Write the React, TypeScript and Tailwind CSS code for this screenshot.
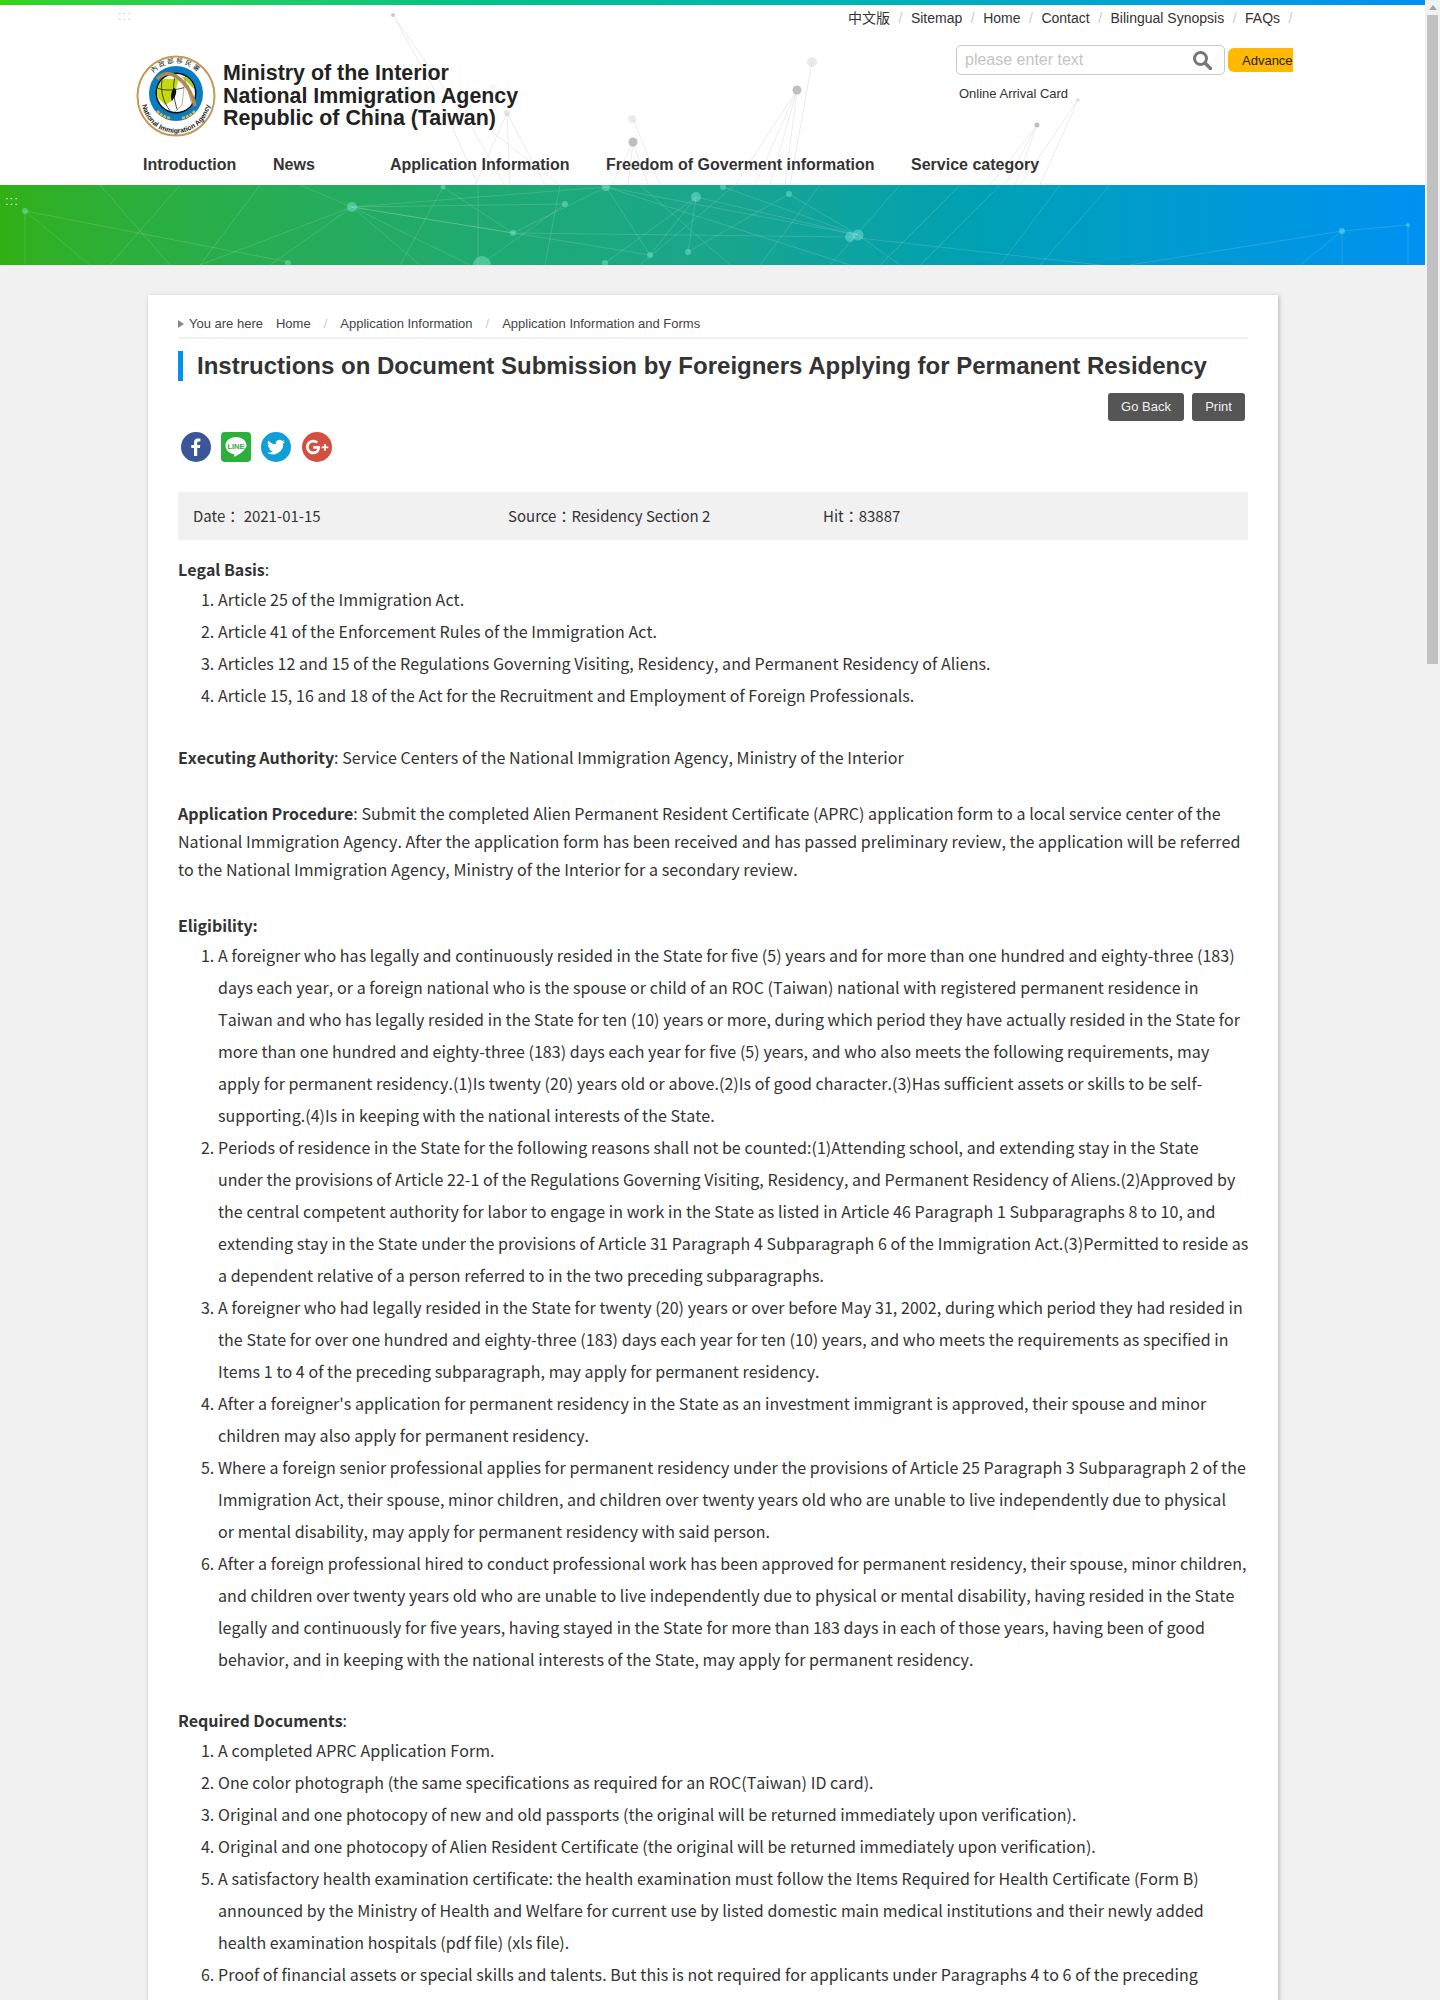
const sans = "font-['Liberation_Sans',Arial,sans-serif]";

const topLinks = ['中文版', 'Sitemap', 'Home', 'Contact', 'Bilingual Synopsis', 'FAQs'];

const navItems = [
  { label: 'Introduction', width: 'w-[130px]' },
  { label: 'News', width: 'w-[117px]' },
  { label: 'Application Information', width: 'w-[216px]' },
  { label: 'Freedom of Goverment information', width: 'w-[305px]' },
  { label: 'Service category', width: 'w-[140px]' },
];

const legalBasis = [
  'Article 25 of the Immigration Act.',
  'Article 41 of the Enforcement Rules of the Immigration Act.',
  'Articles 12 and 15 of the Regulations Governing Visiting, Residency, and Permanent Residency of Aliens.',
  'Article 15, 16 and 18 of the Act for the Recruitment and Employment of Foreign Professionals.',
];

const eligibility = [
  'A foreigner who has legally and continuously resided in the State for five (5) years and for more than one hundred and eighty-three (183) days each year, or a foreign national who is the spouse or child of an ROC (Taiwan) national with registered permanent residence in Taiwan and who has legally resided in the State for ten (10) years or more, during which period they have actually resided in the State for more than one hundred and eighty-three (183) days each year for five (5) years, and who also meets the following requirements, may\napply for permanent residency.(1)Is twenty (20) years old or above.(2)Is of good character.(3)Has sufficient assets or skills to be self-supporting.(4)Is in keeping with the national interests of the State.',
  'Periods of residence in the State for the following reasons shall not be counted:(1)Attending school, and extending stay in the State\nunder the provisions of Article 22-1 of the Regulations Governing Visiting, Residency, and Permanent Residency of Aliens.(2)Approved by the central competent authority for labor to engage in work in the State as listed in Article 46 Paragraph 1 Subparagraphs 8 to 10, and extending stay in the State under the provisions of Article 31 Paragraph 4 Subparagraph 6 of the Immigration Act.(3)Permitted to reside as a dependent relative of a person referred to in the two preceding subparagraphs.',
  'A foreigner who had legally resided in the State for twenty (20) years or over before May 31, 2002, during which period they had resided in the State for over one hundred and eighty-three (183) days each year for ten (10) years, and who meets the requirements as specified in Items 1 to 4 of the preceding subparagraph, may apply for permanent residency.',
  "After a foreigner's application for permanent residency in the State as an investment immigrant is approved, their spouse and minor children may also apply for permanent residency.",
  'Where a foreign senior professional applies for permanent residency under the provisions of Article 25 Paragraph 3 Subparagraph 2 of the Immigration Act, their spouse, minor children, and children over twenty years old who are unable to live independently due to physical\nor mental disability, may apply for permanent residency with said person.',
  'After a foreign professional hired to conduct professional work has been approved for permanent residency, their spouse, minor children, and children over twenty years old who are unable to live independently due to physical or mental disability, having resided in the State legally and continuously for five years, having stayed in the State for more than 183 days in each of those years, having been of good behavior, and in keeping with the national interests of the State, may apply for permanent residency.',
];

const documents = [
  'A completed APRC Application Form.',
  'One color photograph (the same specifications as required for an ROC(Taiwan) ID card).',
  'Original and one photocopy of new and old passports (the original will be returned immediately upon verification).',
  'Original and one photocopy of Alien Resident Certificate (the original will be returned immediately upon verification).',
  'A satisfactory health examination certificate: the health examination must follow the Items Required for Health Certificate (Form B) announced by the Ministry of Health and Welfare for current use by listed domestic main medical institutions and their newly added health examination hospitals (pdf file) (xls file).',
  'Proof of financial assets or special skills and talents. But this is not required for applicants under Paragraphs 4 to 6 of the preceding',
];

function Emblem() {
  return (
    <svg viewBox="0 0 80 82" className="w-[80px] h-[82px] shrink-0">
      <defs>
        <path id="ringBottom" d="M5.500 44 A34.500 34 0 0 0 74.500 44" fill="none" />
        <path id="ringTop" d="M10 38 A30 30 0 0 1 70 38" fill="none" />
        <clipPath id="globeClip">
          <circle cx="40" cy="38" r="19" />
        </clipPath>
      </defs>
      <ellipse cx="40" cy="41" rx="38.500" ry="39.500" fill="#fff" stroke="#c49a5a" strokeWidth="2" />
      <ellipse cx="40" cy="38.500" rx="27" ry="27.500" fill="#0a7cc2" />
      <circle cx="40" cy="38" r="20.500" fill="#111" />
      <g clipPath="url(#globeClip)">
        <rect x="20" y="18" width="40" height="40" fill="#fff" />
        <path d="M21 24h22l-3 10-4 12-7 4-8-8z" fill="#c4d910" />
        <path d="M46 22h12v12z" fill="#a8cc20" />
        <path d="M21 33c8 3 18 3 32-2M27 21c-3 10-2 24 8 36M40 19c-4 10-3 24 2 38" fill="none" stroke="#222" strokeWidth="0.800" />
        <path d="M38 33c3 1 3 5 0 10l-2 3c-2-4-1-10 2-13z" fill="#111" />
        <path d="M49 24l8 30-19 4 8-8z" fill="#fff" stroke="#666" strokeWidth="0.500" />
      </g>
      <path d="M21 24c6-6 13-7 20-2 9 6 15 16 18 29" fill="none" stroke="#b08a4a" strokeWidth="3.500" />
      <path d="M21 56c4 4 8 6 13 7M59 56c-4 4-8 6-13 7" fill="none" stroke="#e0b93a" strokeWidth="2.500" strokeDasharray="3 1" />
      <text fontSize="6.900" fontWeight="700" fill="#222" fontFamily="'Liberation Sans',Arial,sans-serif">
        <textPath href="#ringBottom" startOffset="50%" textAnchor="middle">National Immigration Agency</textPath>
      </text>
      <text fontSize="6.500" fill="#222" letterSpacing="2" fontFamily="'Noto Sans CJK TC',sans-serif">
        <textPath href="#ringTop" startOffset="50%" textAnchor="middle">內政部移民署</textPath>
      </text>
    </svg>
  );
}

function HeaderNetwork() {
  return (
    <svg viewBox="0 0 1425 185" className="absolute left-0 -top-[5px] w-[1425px] h-[185px] pointer-events-none">
      <g stroke="#ececec" strokeWidth="1" fill="none">
        <path d="M393 15L470 125L505 185M393 15L440 100L478 185" />
        <path d="M507 113L475 185M507 113L510 185M507 113L545 185M490 130L560 185" />
        <path d="M633 143L612 185M633 143L628 185M633 143L648 185M633 119L660 185" />
        <path d="M797 90L735 185M797 90L755 185M797 90L770 185M797 90L785 185M812 62L790 185" />
        <path d="M1037 125L990 185M1037 125L1005 185M1037 125L1015 185M1078 100L1040 185M1078 100L1020 185" />
      </g>
      <g fill="#bdbdbd">
        <circle cx="393" cy="15" r="2" opacity="0.8" />
        <circle cx="797" cy="90" r="4.500" opacity="0.95" />
        <circle cx="632" cy="119" r="4" opacity="0.3" />
        <circle cx="633" cy="142" r="4.500" />
        <circle cx="812" cy="62" r="5" opacity="0.3" />
        <circle cx="507" cy="113" r="3" opacity="0.4" />
        <circle cx="493" cy="87" r="3" opacity="0.15" />
        <circle cx="1037" cy="125" r="2.500" />
        <circle cx="1078" cy="100" r="2" opacity="0.4" />
      </g>
    </svg>
  );
}

function BannerNetwork() {
  const nodes = [
    [25, 26, 3], [352, 22, 5], [443, 2, 2.500], [513, 48, 3], [565, 19, 3], [606, 2, 4], [696, 12, 5],
    [789, 9, 3], [723, 2, 3], [605, 78, 3], [650, 70, 3], [688, 67, 3], [850, 52, 5], [858, 50, 5.500],
    [288, 78, 3], [482, 80, 9], [1342, 46, 3], [1408, 40, 2],
  ];
  const lines = [
    [25, 26, 288, 77], [25, 26, 25, 80], [25, 26, 90, 80], [100, 0, 170, 80], [180, 0, 110, 80], [260, 0, 200, 80],
    [352, 22, 200, 80], [352, 22, 565, 19], [352, 22, 650, 70], [352, 22, 606, 2], [352, 22, 513, 48], [352, 22, 420, 80],
    [352, 22, 470, 80], [352, 22, 270, 80], [352, 22, 300, 0], [443, 2, 400, 80], [443, 2, 513, 48], [478, 0, 478, 80],
    [513, 48, 850, 52], [565, 19, 480, 80], [606, 2, 513, 48], [606, 2, 650, 70], [606, 2, 858, 50], [696, 12, 650, 70],
    [696, 12, 688, 67], [696, 12, 858, 50], [696, 12, 605, 78], [789, 9, 688, 67], [789, 9, 858, 50], [723, 2, 858, 50],
    [600, 0, 850, 80], [850, 52, 1100, 80], [858, 50, 900, 80], [830, 80, 900, 0], [880, 80, 960, 0], [920, 80, 1000, 0],
    [1000, 80, 1060, 0], [1040, 80, 1110, 0], [560, 0, 545, 80], [640, 0, 730, 80], [735, 0, 640, 80], [820, 0, 760, 80],
    [1342, 46, 1130, 80], [1342, 46, 1300, 80], [1342, 46, 1342, 80], [1408, 40, 1342, 46], [1408, 40, 1408, 80],
  ];
  return (
    <svg viewBox="0 0 1425 80" className="absolute inset-0 w-full h-full">
      <g stroke="#fff" strokeOpacity="0.14" strokeWidth="1">
        {lines.map(([x1, y1, x2, y2], i) => (
          <line key={i} x1={x1} y1={y1} x2={x2} y2={y2} />
        ))}
      </g>
      <g fill="#8ff0e0" fillOpacity="0.4">
        {nodes.map(([cx, cy, r], i) => (
          <circle key={i} cx={cx} cy={cy} r={r} />
        ))}
      </g>
    </svg>
  );
}

function Social() {
  return (
    <div className="flex gap-[10px] h-[30px] ml-[3px] mt-[11px]">
      <svg viewBox="0 0 30 30" className="w-[30px] h-[30px]">
        <circle cx="15" cy="15" r="15" fill="#3b5599" />
        <path d="M16.200 24v-8h2.700l.4-3.100h-3.100v-2c0-.9.3-1.500 1.500-1.500h1.700V6.600c-.3 0-1.300-.1-2.400-.1-2.400 0-4 1.400-4 4.100v2.300h-2.700V16h2.700v8z" fill="#fff" />
      </svg>
      <svg viewBox="0 0 30 30" className="w-[30px] h-[30px]">
        <rect width="30" height="30" rx="4" fill="#2bb03b" />
        <path d="M15 5c-6 0-10.500 3.700-10.500 8.600 0 4.300 3.500 7.900 8.300 8.500.7.200.5 1 .3 2-.1.600.2.800.8.500 2.300-1.300 6.800-3.700 9-6.400 1.700-1.800 2.600-3 2.600-4.600C25.500 8.700 21 5 15 5z" fill="#fff" />
        <text x="15" y="16.500" textAnchor="middle" fontSize="7.500" fontWeight="700" fill="#2bb03b" fontFamily="'Liberation Sans',Arial,sans-serif">LINE</text>
      </svg>
      <svg viewBox="0 0 30 30" className="w-[30px] h-[30px]">
        <circle cx="15" cy="15" r="15" fill="#0f9ed8" />
        <path d="M24 9.400c-.7.300-1.400.5-2.100.6.800-.5 1.300-1.200 1.600-2-.7.400-1.500.7-2.300.9a3.700 3.700 0 0 0-6.300 3.400c-3-.2-5.800-1.600-7.600-3.900a3.700 3.700 0 0 0 1.100 4.900c-.6 0-1.200-.2-1.700-.5 0 1.800 1.300 3.400 3 3.700-.5.200-1.100.2-1.700.1.500 1.500 1.900 2.500 3.500 2.600A7.500 7.500 0 0 1 6 20.800a10.500 10.500 0 0 0 16.200-9.300c.7-.6 1.300-1.300 1.800-2.100z" fill="#fff" />
      </svg>
      <svg viewBox="0 0 30 30" className="w-[30px] h-[30px] ml-[1px]">
        <circle cx="15" cy="15" r="15" fill="#d34f40" />
        <path d="M11 14v2.800h4.300c-.5 1.700-2 2.700-4.100 2.700a4.500 4.500 0 0 1 0-9c1.200 0 2.200.4 3 1.100l2-2a7.300 7.300 0 1 0-5 12.700c4.300 0 7.100-3 6.700-8.300z" fill="#fff" />
        <path d="M22 12v2.500h-2.500v1.800H22v2.500h1.800v-2.500h2.500v-1.800h-2.500V12z" fill="#fff" />
      </svg>
    </div>
  );
}

function Steps({ items }: { items: string[] }) {
  return (
    <ol className="list-decimal pl-[40px] -mr-[5px] leading-[32px] whitespace-pre-line">
      {items.map((item) => (
        <li key={item}>{item}</li>
      ))}
    </ol>
  );
}

export default function App() {
  return (
    <div className="flex h-[2000px] overflow-hidden bg-[#f1f1f1]">
      <div className="relative w-[1425px] shrink-0">
        <div className="h-[5px] bg-gradient-to-r from-[#33d60a] to-[#0091f2]" />

        <header className={`relative h-[180px] bg-white text-[#333] overflow-hidden ${sans}`}>
          <HeaderNetwork />
          <span className="absolute left-[118px] top-[1px] text-[13px] tracking-[1px] text-[#ccc]">:::</span>

          <div className="relative flex items-start pl-[136px] pt-[5px]">
            <div className="w-[712px] pt-[45px] flex items-center gap-[7px]">
              <Emblem />
              <div className="text-[21.400px] font-bold leading-[22.700px] text-[#222]">
                <div>Ministry of the Interior</div>
                <div>National Immigration Agency</div>
                <div>Republic of China (Taiwan)</div>
              </div>
            </div>
            <div className="w-[460px]">
              <ul className="flex items-center text-[14px] h-[16px] leading-[16px]">
                {topLinks.map((link) => (
                  <li key={link} className="flex items-center">
                    <span className="font-['Liberation_Sans','Noto_Sans_CJK_TC',sans-serif]">{link}</span>
                    <span className="mx-[8.500px] text-[#ccc]">/</span>
                  </li>
                ))}
              </ul>
              <div className="flex items-center gap-[3px] mt-[19px] ml-[108px]">
                <div className="flex items-center w-[269px] h-[30px] border border-[#c8c8c8] rounded-[5px] pl-[8px] pr-[12px] bg-white">
                  <span className="flex-1 text-[16px] text-[#c4c4c4]">please enter text</span>
                  <svg viewBox="0 0 20 20" className="w-[20px] h-[20px]" fill="none" stroke="#777" strokeWidth="3">
                    <circle cx="8.500" cy="8.500" r="6" />
                    <path d="M13 13l5.500 5.500" strokeWidth="3.500" strokeLinecap="round" />
                  </svg>
                </div>
                <div className="w-[65px] h-[24px] overflow-hidden whitespace-nowrap rounded-l-[6px] bg-[#ffb900] pl-[14px] text-[13px] leading-[25px] text-[#222]">
                  Advance
                </div>
              </div>
              <div className="mt-[11px] ml-[111px] text-[13px] leading-[16px]">Online Arrival Card</div>
            </div>
          </div>

          <nav className="absolute left-[143px] top-[150px] flex text-[16px] font-bold leading-[20px] text-[#333]">
            {navItems.map((item) => (
              <div key={item.label} className={`${item.width} whitespace-nowrap`}>
                {item.label}
              </div>
            ))}
          </nav>
        </header>

        <div className="relative h-[80px] overflow-hidden bg-gradient-to-r from-[#31b012] via-[#1aa68c] to-[#0091f2]">
          <BannerNetwork />
          <span className={`absolute left-[5px] top-[6px] text-[13px] tracking-[1px] text-[#dff5d8] ${sans}`}>:::</span>
        </div>

        <main className="relative mx-[148px] mt-[30px] w-[1130px] min-h-[1800px] bg-white px-[30px] pt-[17px] shadow-[1px_1px_4px_rgba(0,0,0,0.25)]">
          <div className={`flex items-center h-[27px] pb-[2px] border-b-2 border-[#f1f1f1] text-[13px] text-[#444] ${sans}`}>
            <span className="mr-[5px] border-y-[4.500px] border-l-[6px] border-y-transparent border-l-[#888]" />
            <span className="mr-[13px]">You are here</span>
            <span>Home</span>
            <span className="mx-[13px] text-[#ccc]">/</span>
            <span>Application Information</span>
            <span className="mx-[13px] text-[#ccc]">/</span>
            <span>Application Information and Forms</span>
          </div>

          <h1 className={`mt-[12px] flex items-center h-[30px] border-l-[5px] border-[#0091ee] pl-[14px] text-[24px] font-bold text-[#333] whitespace-nowrap ${sans}`}>
            Instructions on Document Submission by Foreigners Applying for Permanent Residency
          </h1>

          <div className={`mt-[12px] flex justify-end gap-[8px] pr-[3px] text-[13px] text-[#f1f1f1] ${sans}`}>
            <div className="flex items-center justify-center w-[76px] h-[28px] rounded-[3px] bg-[#555]">Go Back</div>
            <div className="flex items-center justify-center w-[53px] h-[28px] rounded-[3px] bg-[#555]">Print</div>
          </div>

          <Social />

          <div className="font-['Noto_Sans_CJK_TC',sans-serif] text-[16px] text-[#333] [font-kerning:none] tracking-[0.055px]">
            <div className="mt-[30px] flex items-center h-[48px] bg-[#f1f1f1] pl-[15px] text-[15px] [font-kerning:auto] tracking-normal">
              <span className="w-[315px]">Date： 2021-01-15</span>
              <span className="w-[315px]">Source：Residency Section 2</span>
              <span>Hit：83887</span>
            </div>

            <p className="mt-[15px] leading-[28px]"><strong className="tracking-[-0.05px]">Legal Basis</strong>:</p>
            <Steps items={legalBasis} />

            <p className="mt-[32px] leading-[28px]">
              <strong className="tracking-[-0.05px]">Executing Authority</strong>: Service Centers of the National Immigration Agency, Ministry of the Interior
            </p>

            <p className="mt-[28px] leading-[28px]">
              <strong className="tracking-[-0.05px]">Application Procedure</strong>: Submit the completed Alien Permanent Resident Certificate (APRC) application form to a local service center of the National Immigration Agency. After the application form has been received and has passed preliminary review, the application will be referred to the National Immigration Agency, Ministry of the Interior for a secondary review.
            </p>

            <p className="mt-[28px] leading-[28px]"><strong className="tracking-[-0.05px]">Eligibility:</strong></p>
            <Steps items={eligibility} />

            <p className="mt-[31px] leading-[28px]"><strong className="tracking-[-0.05px]">Required Documents</strong>:</p>
            <Steps items={documents} />
          </div>
        </main>
      </div>

      <aside className="flex w-[15px] shrink-0 flex-col items-center bg-[#f1f1f1]">
        <div className="mt-[5px] h-0 w-0 border-x-[4px] border-b-[5px] border-x-transparent border-b-[#a3a3a3]" />
        <div className="mt-[5px] h-[649px] w-[11px] bg-[#c1c1c1]" />
      </aside>
    </div>
  );
}
